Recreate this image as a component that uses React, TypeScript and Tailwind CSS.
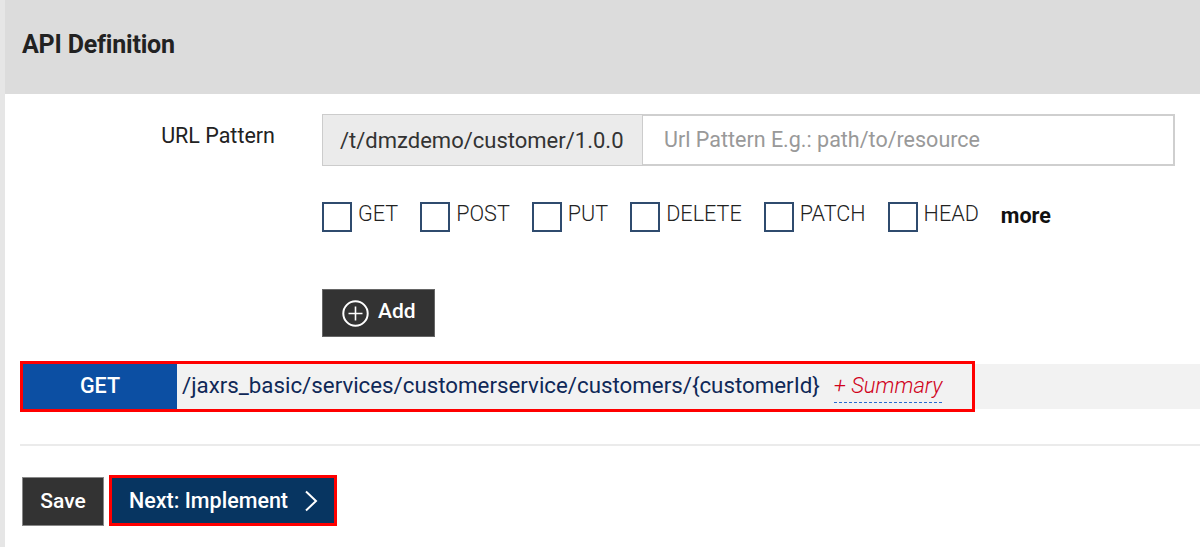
import React from "react";

const methods = ["GET", "POST", "PUT", "DELETE", "PATCH", "HEAD"];

export default function App() {
  return (
    <div
      className="flex h-[547px] w-[1200px] overflow-hidden bg-white text-[#222]"
      style={{ fontFamily: "Roboto, 'Noto Sans', sans-serif" }}
    >
      <div className="w-[5px] shrink-0 bg-[#e6e6e6]" />
      <div className="flex min-w-0 flex-1 flex-col">
        <div className="flex h-[94px] shrink-0 items-center bg-[#dcdcdc] pl-[17px] pb-[4px]">
          <h1 className="text-[25px] font-bold tracking-[-0.2px] text-[#222]">API Definition</h1>
        </div>

        <div className="flex pt-[20px]">
          <div className="w-[270px] shrink-0 pt-[6px] text-right text-[21.5px] text-[#222]">URL Pattern</div>
          <div className="ml-[47px] flex flex-col">
            <div className="flex h-[52px]">
              <div className="flex w-[321px] items-center border border-[#cccccc] bg-[#ebebeb] pl-[17px] text-[22px] text-[#333]">
                /t/dmzdemo/customer/1.0.0
              </div>
              <div className="flex w-[532px] items-center border-y-2 border-r-2 border-[#cfcfcf] pl-[21px] text-[21.5px] text-[#999]">
                Url Pattern E.g.: path/to/resource
              </div>
            </div>

            <div className="mt-[35px] flex items-center gap-[22px]">
              {methods.map((m) => (
                <div key={m} className="flex items-center gap-[6px]">
                  <div className="h-[30px] w-[30px] border-2 border-[#2f4b6e]" />
                  <span className="-mt-[4px] text-[21.6px] font-light text-[#222]">{m}</span>
                </div>
              ))}
              <span className="-mt-[1px] text-[21.5px] font-bold text-[#111]">more</span>
            </div>

            <button className="mt-[57px] flex h-[48px] w-[113px] items-center gap-[9px] border border-[#666] bg-[#333] pl-[19px] text-white">
              <svg width="27" height="27" viewBox="0 0 27 27" fill="none" stroke="white" strokeWidth="2">
                <circle cx="13.5" cy="13.5" r="12.2" />
                <path d="M13.5 6.5v14M6.5 13.5h14" strokeWidth="1.6" />
              </svg>
              <span className="-mt-[3px] text-[21px] font-medium">Add</span>
            </button>
          </div>
        </div>

        <div className="mt-[27px] ml-[18px] flex h-[45px] bg-[#f2f2f2]">
          <div className="flex w-[949px] shrink-0 outline-[3px] outline-solid outline-[#ff0000]">
            <div className="flex w-[154px] items-center justify-center bg-[#0c4fa3] pb-[2px] text-[21.5px] font-medium text-white">
              GET
            </div>
            <div className="flex items-center pl-[5px] pb-[3px] text-[22.3px] text-[#0f2857]">
              /jaxrs_basic/services/customerservice/customers/{"{customerId}"}
              <span className="ml-[14px] mt-[2px] border-b border-dashed border-[#2a6bd1] text-[22px] italic font-light text-[#d0021b]">
                + Summary
              </span>
            </div>
          </div>
        </div>

        <div className="mt-[35px] ml-[15px] h-[2px] bg-[#ebebeb]" />

        <div className="mt-[31px] ml-[17px] flex items-center gap-[8px]">
          <button className="flex h-[49px] w-[82px] items-center justify-center border border-[#888] bg-[#333] text-[21px] font-medium text-white">
            Save
          </button>
          <button className="-mt-[2px] flex h-[45px] w-[222px] items-center gap-[16px] bg-[#073561] pl-[17px] text-[21.5px] font-medium text-white outline-[3px] outline-solid outline-[#ff0000]">
            Next: Implement
            <svg width="14" height="22" viewBox="0 0 14 22" fill="none" stroke="white" strokeWidth="2">
              <path d="M2 1.5l10 9.5-10 9.5" />
            </svg>
          </button>
        </div>
      </div>
    </div>
  );
}
